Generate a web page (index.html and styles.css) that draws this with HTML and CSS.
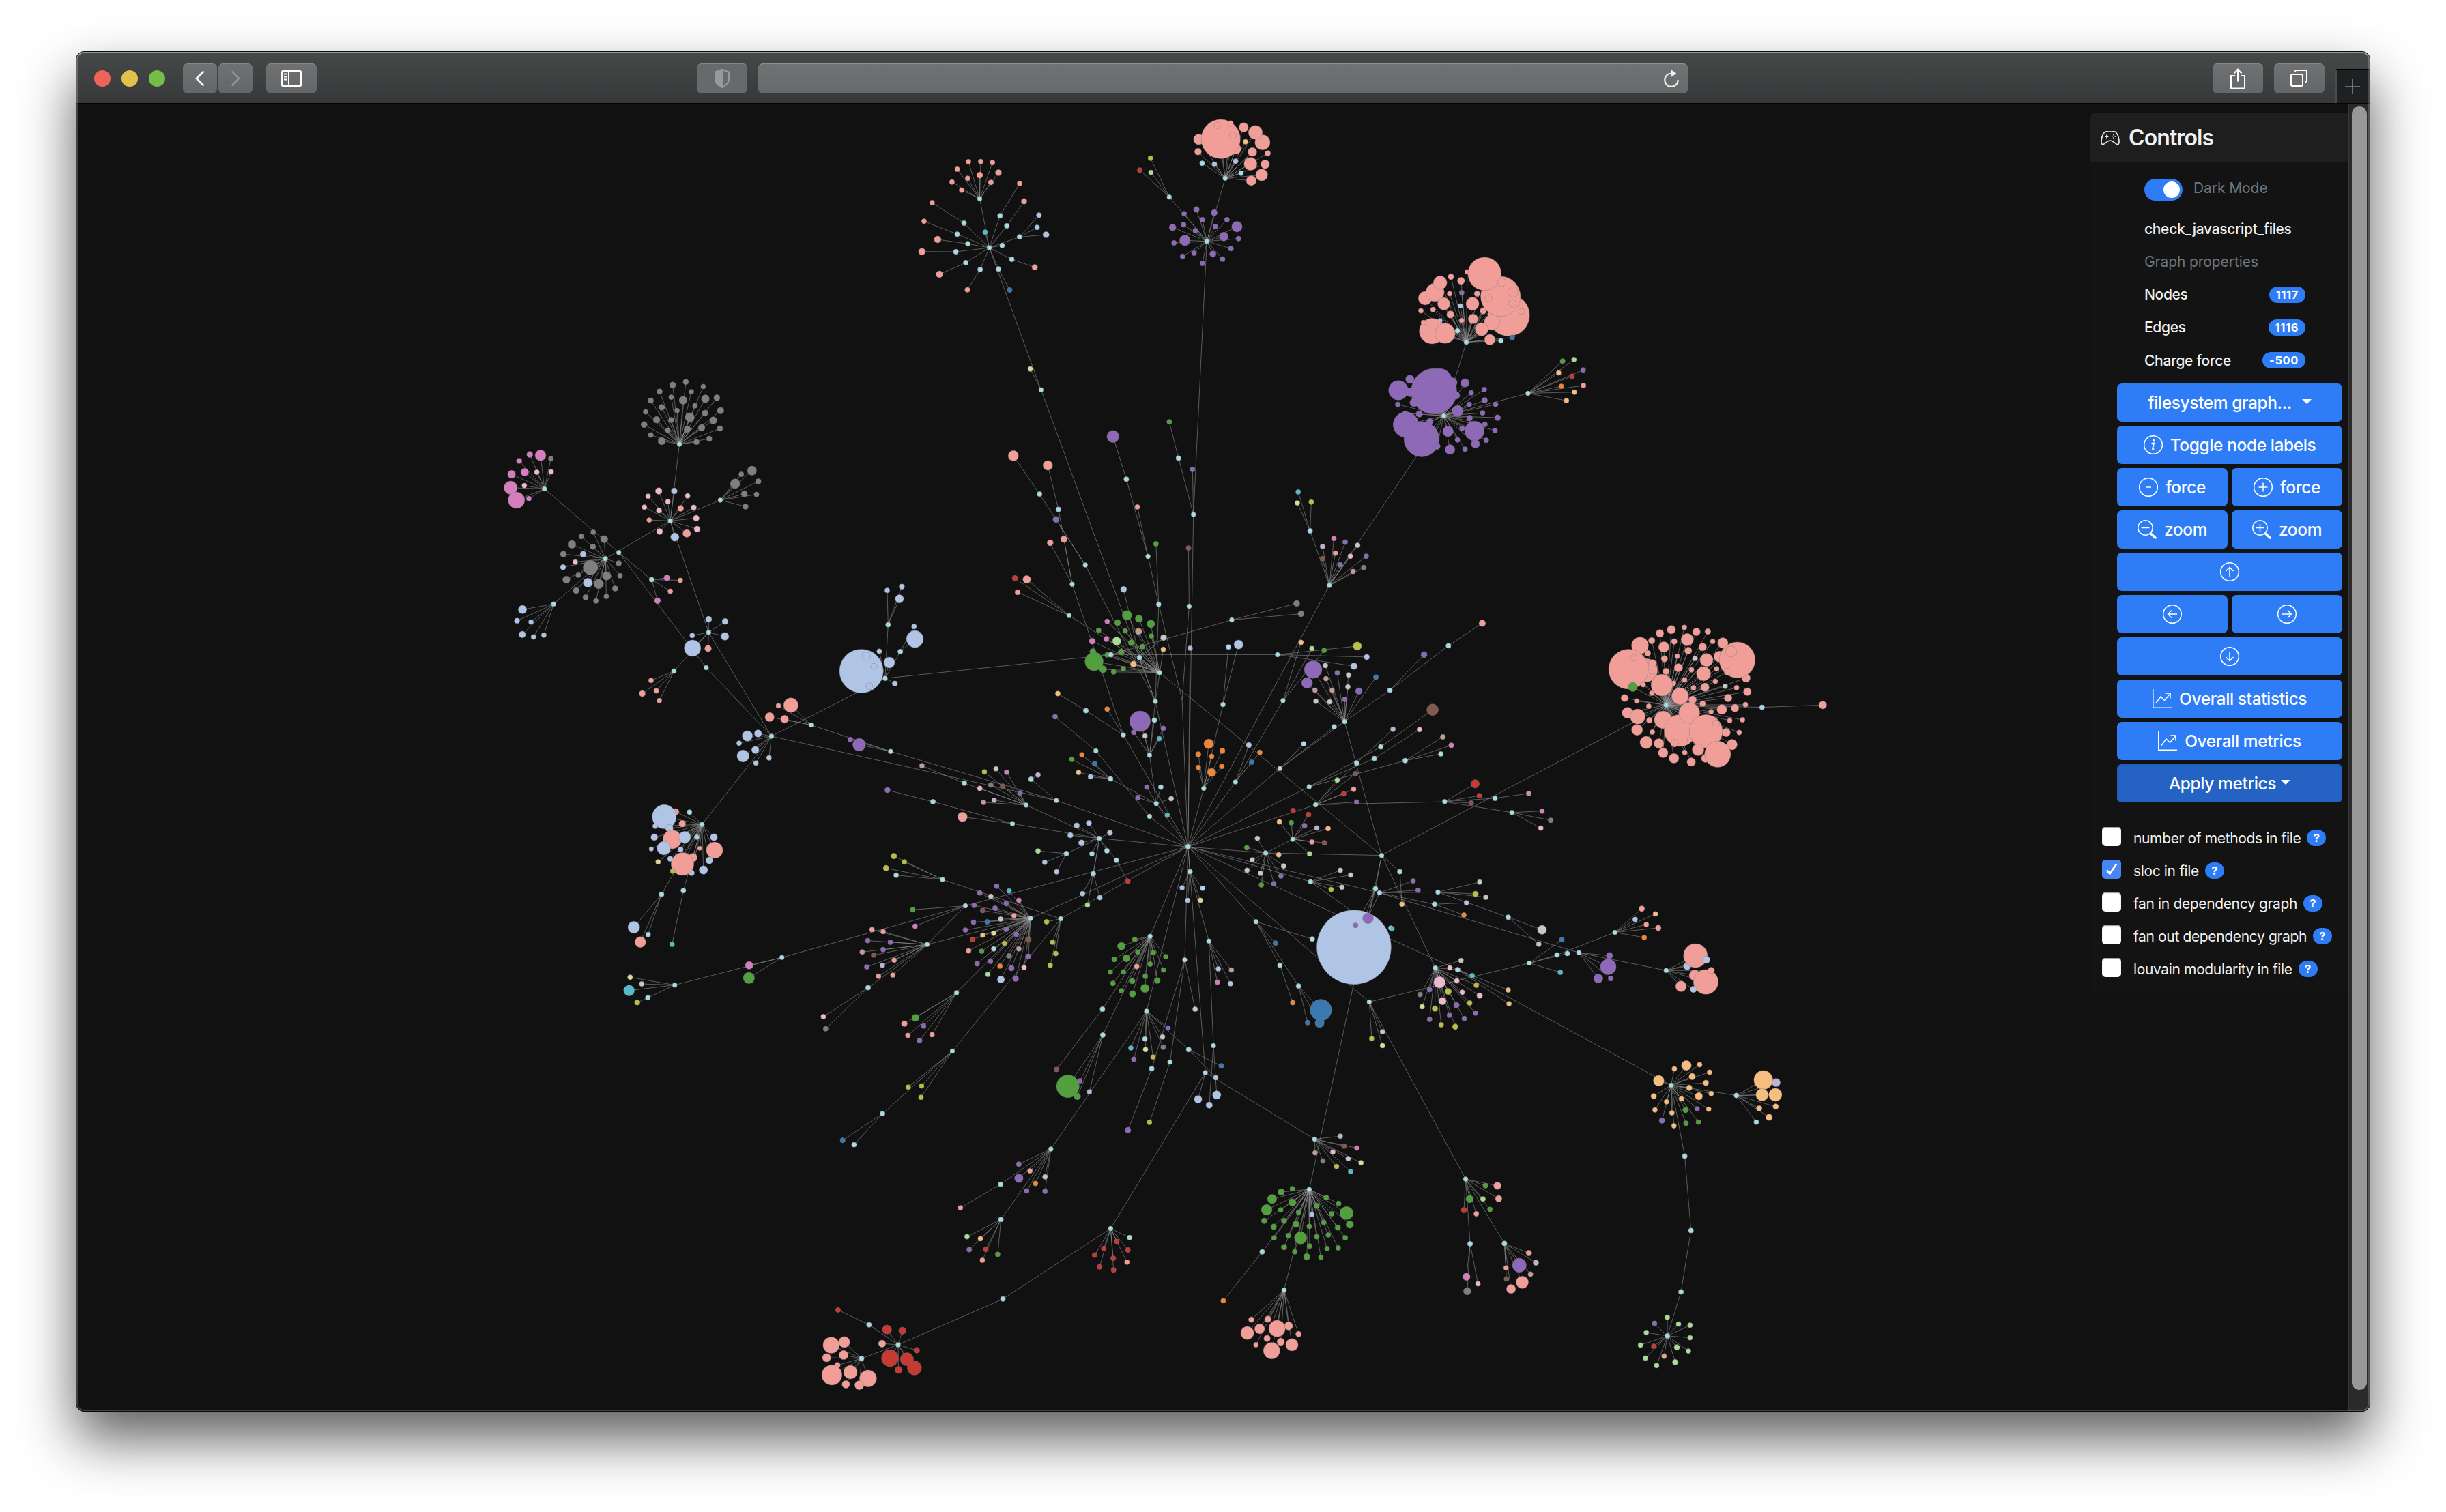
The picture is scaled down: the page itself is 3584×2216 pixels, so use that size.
FILE: index.html
```html
<!DOCTYPE html>
<html lang="en">
<head>
<meta charset="utf-8">
<title>Graph</title>
<link rel="stylesheet" href="styles.css">
</head>
<body>
<svg class="sprite" aria-hidden="true">
  <symbol id="minus" viewBox="0 0 28 28"><circle cx="14" cy="14" r="13.3"/><path d="M10 14h8"/></symbol>
  <symbol id="plus" viewBox="0 0 28 28"><circle cx="14" cy="14" r="13.3"/><path d="M7.5 14h13M14 7.500v13"/></symbol>
  <symbol id="up" viewBox="0 0 28 28"><circle cx="14" cy="14" r="13.300"/><path d="M14 21V8M8.500 13 14 7.500l5.500 5.500"/></symbol>
  <symbol id="down" viewBox="0 0 28 28"><circle cx="14" cy="14" r="13.300"/><path d="M14 7v13M8.500 15l5.500 5.500 5.500-5.500"/></symbol>
  <symbol id="left" viewBox="0 0 28 28"><circle cx="14" cy="14" r="13.300"/><path d="M21 14H8M13 8.500 7.500 14l5.500 5.500"/></symbol>
  <symbol id="right" viewBox="0 0 28 28"><circle cx="14" cy="14" r="13.300"/><path d="M7 14h13M15 8.500l5.500 5.500-5.500 5.500"/></symbol>
  <symbol id="info" viewBox="0 0 28 28"><circle cx="14" cy="14" r="13.300"/><path d="M11.500 11.800l3.600-.5-2 8.200c-.2 1.200.9 1.200 2 0" stroke-width="1.800"/><circle cx="14.800" cy="7.800" r="1" fill="#fff"/></symbol>
  <symbol id="zoomout" viewBox="0 0 28 28"><circle cx="11.500" cy="11.500" r="10.700"/><path d="M5.500 11.500h12"/><path d="M19.500 20l6.500 6" stroke-width="3.600" stroke-linecap="round"/></symbol>
  <symbol id="zoomin" viewBox="0 0 28 28"><circle cx="11.500" cy="11.500" r="10.700"/><path d="M5.500 11.500h12M11.500 6v11"/><path d="M19.500 20l6.500 6" stroke-width="3.600" stroke-linecap="round"/></symbol>
  <symbol id="chart" viewBox="0 0 28 28"><path d="M.8 0v27.200H28M5 20.500l7-9.500 5.500 5.500L26 6.500M18.500 6H26v7.500"/></symbol>
</svg>
<div class="window">
  <header class="toolbar">
    <span class="dot red"></span><span class="dot yellow"></span><span class="dot green"></span>
    <span class="tool back"><svg width="14" height="24" viewBox="0 0 14 24"><path d="M12.500 1.500 2 12l10.500 10.500" stroke-width="2.800"/></svg></span>
    <span class="tool forward"><svg width="14" height="24" viewBox="0 0 14 24"><path d="M1.500 1.500 12 12 1.500 22.500" stroke-width="2.400"/></svg></span>
    <span class="tool wide sidebar"><svg width="30" height="24" viewBox="0 0 30 24"><rect x="1" y="1" width="28" height="22" rx="1.500"/><path d="M11 1v22M4 5.500h4M4 9.500h4M4 13.500h4"/></svg></span>
    <span class="tool wide shield"><svg width="26" height="28" viewBox="0 0 26 28"><path d="M13 1 23 4.500V15c0 5-4 9-10 12C7 24 3 20 3 15V4.500z"/><path d="M13 1v26C7 24 3 20 3 15V4.500z" fill="#98999b"/></svg></span>
    <div class="address"><svg width="26" height="28" viewBox="0 0 26 28"><path d="M13.500 6.500A9.700 9.700 0 1 0 22.700 16" stroke-width="2.200"/><path d="M12.500 1l8 5.700-8 5.300z" fill="#eee" stroke="none"/></svg></div>
    <span class="tool wide share"><svg width="24" height="32" viewBox="0 0 24 32"><path d="M8 12H2v18.500h20V12h-6M12 20.500V3M6.500 8.500 12 2.500l5.500 6"/></svg></span>
    <span class="tool wide tabs"><svg width="26" height="26" viewBox="0 0 26 26"><rect x="1" y="7" width="17" height="17" rx="2"/><path d="M7 4V3q0-2 2-2h13q2 0 2 2v13q0 2-2 2h-1"/></svg></span>
    <span class="newtab"><svg width="22" height="22" viewBox="0 0 22 22"><path d="M11 0v22M0 11h22" stroke-width="1.600"/></svg></span>
  </header>
  <main class="page">
    <svg class="graph" id="graph" viewBox="112 152 2950 1916"></svg>
    <aside class="panel">
      <h1 class="title"><svg width="28" height="22" viewBox="0 0 28 22"><path d="M5.500 3C7 1.500 9.500 2 11 2h6c1.500 0 4-.5 5.500 1 3 3.500 4.500 10 4.500 14 0 3-1.500 4-3 3.500-3-1-5.500-5.500-10-5.500s-7 4.500-10 5.500C2.500 21 1 20 1 17 1 13 2.500 6.500 5.500 3z"/><path d="M9 6.500v5M6.500 9h5" stroke-width="1.800"/><path d="M19 6v1.500M19 10.500V12M16 9h1.500M20.500 9H22" stroke-width="1.700"/></svg>Controls</h1>
      <div class="props">
        <div class="row mode"><span class="switch"></span><span class="label muted">Dark Mode</span></div>
        <div class="row"><span class="file">check_javascript_files</span></div>
        <div class="row"><span class="muted">Graph properties</span></div>
        <div class="row"><span>Nodes</span><b class="badge">1117</b></div>
        <div class="row"><span>Edges</span><b class="badge">1116</b></div>
        <div class="row"><span>Charge force</span><b class="badge">-500</b></div>
      </div>
      <div class="buttons">
        <button class="btn full">filesystem graph...<i class="caret"></i></button>
        <button class="btn full"><svg class="icon"><use href="#info"/></svg>Toggle node labels</button>
        <button class="btn"><svg class="icon"><use href="#minus"/></svg>force</button>
        <button class="btn"><svg class="icon"><use href="#plus"/></svg>force</button>
        <button class="btn"><svg class="icon"><use href="#zoomout"/></svg>zoom</button>
        <button class="btn"><svg class="icon"><use href="#zoomin"/></svg>zoom</button>
        <button class="btn full"><svg class="icon"><use href="#up"/></svg></button>
        <button class="btn"><svg class="icon"><use href="#left"/></svg></button>
        <button class="btn"><svg class="icon"><use href="#right"/></svg></button>
        <button class="btn full"><svg class="icon"><use href="#down"/></svg></button>
        <button class="btn full"><svg class="icon"><use href="#chart"/></svg>Overall statistics</button>
        <button class="btn full"><svg class="icon"><use href="#chart"/></svg>Overall metrics</button>
        <button class="btn full active">Apply metrics<i class="caret near"></i></button>
      </div>
      <div class="metrics">
        <label class="metric"><span class="box"></span>number of methods in file<b class="badge q">?</b></label>
        <label class="metric"><span class="box checked"><svg width="18" height="18" viewBox="0 0 18 18"><path d="M2 10.500 6.500 15.500 16 1.500"/></svg></span>sloc in file<b class="badge q">?</b></label>
        <label class="metric"><span class="box"></span>fan in dependency graph<b class="badge q">?</b></label>
        <label class="metric"><span class="box"></span>fan out dependency graph<b class="badge q">?</b></label>
        <label class="metric"><span class="box"></span>louvain modularity in file<b class="badge q">?</b></label>
      </div>
    </aside>
    <div class="scroll"><div class="thumb"></div></div>
  </main>
</div>
<script src="graph.js"></script>
</body>
</html>
```
FILE: styles.css
```css
* { box-sizing: border-box; }
body { margin: 0; width: 3584px; height: 2216px; padding: 75px 111px; background: #fff; overflow: hidden; font-family: Inter, "Liberation Sans", sans-serif; }
.sprite { position: absolute; width: 0; height: 0; }
svg { fill: none; stroke: #fff; stroke-width: 2; display: block; flex: none; }
.window { position: relative; width: 3362px; height: 1994px; border: 1px solid #0a0a0a; border-radius: 12px; overflow: hidden; background: #111; box-shadow: 0 40px 80px rgba(0,0,0,.63); display: flex; flex-direction: column; }
.window::after { content: ""; position: absolute; inset: 0; border-radius: 11px; box-shadow: inset 0 2px 0 rgba(255,255,255,.3), inset 0 0 0 2px rgba(255,255,255,.2); pointer-events: none; }
.toolbar { height: 76px; flex: none; display: flex; align-items: center; padding: 2px 0 0 26px; border-bottom: 1px solid #050505; background: linear-gradient(#464949, #373839); }
.dot { width: 24px; height: 24px; border-radius: 50%; margin-right: 16px; }
.red { background: #ed655a; }
.yellow { background: #e1c04c; }
.green { background: #72be47; }
.tool { width: 50px; height: 44px; display: flex; align-items: center; justify-content: center; border-radius: 7px; background: linear-gradient(#6f7173, #656667); box-shadow: inset 0 1px 0 #858789; }
.back { margin-left: 10px; }
.forward { margin: 0 20px 0 2px; }
.forward svg { stroke: #98999b; }
.wide { width: 74px; }
.shield { margin-left: 557px; margin-right: 16px; background: #67696b; }
.shield svg { stroke: #98999b; }
.address { width: 1362px; height: 44px; border-radius: 7px; background: linear-gradient(#717274, #68696b); box-shadow: inset 0 1px 0 #8d8f91; display: flex; align-items: center; justify-content: flex-end; padding-right: 11px; }
.address svg { stroke: #eee; }
.share { margin-left: 769px; margin-right: 16px; }
.newtab { margin-left: 16px; align-self: flex-end; flex: 1; height: 50px; background: #1e2021; border-top: 1px solid #000; border-left: 2px solid #4a4c4d; display: flex; align-items: center; justify-content: center; padding-right: 3px; }
.newtab svg { stroke: #858585; }
.page { flex: 1; display: flex; align-items: flex-start; }
.graph { width: 2950px; height: 1916px; }
.graph line { stroke: #999; stroke-opacity: .55; stroke-width: 1; }
.graph circle { stroke: #777; stroke-opacity: .5; stroke-width: .8; }
.panel { width: 378px; margin-top: 14px; background: #131313; border-radius: 6px 0 0 6px; color: #f0f0f0; }
.title { margin: 0; height: 72px; padding: 0 0 2px 16px; display: flex; align-items: center; gap: 13px; background: #1e1e1e; border-radius: 6px 0 0 0; font-size: 32px; font-weight: 600; letter-spacing: -.9px; }
.title svg { stroke: #e8e8e8; stroke-width: 1.700; margin-top: 2px; }
.props { margin: 0 22px 0 40px; font-size: 21px; font-weight: 500; letter-spacing: -.32px; }
.row { height: 48px; padding: 0 40px; display: flex; align-items: center; justify-content: space-between; border-bottom: 1px solid #101010; }
.row:last-child { border: 0; }
.mode { height: 74px; justify-content: flex-start; gap: 16px; padding-top: 6px; }
.mode .label { margin-top: -5px; }
.muted { color: #6c757d; font-weight: 400; letter-spacing: -.08px; }
.switch { width: 56px; height: 32px; border-radius: 16px; background: #2f7df6; display: flex; justify-content: flex-end; padding: 4px; }
.switch::after { content: ""; width: 24px; height: 24px; border-radius: 50%; background: #fff; }
.badge { height: 24px; padding: 0 10px; border-radius: 12px; background: #2f7df6; color: #fff; font-size: 16.500px; font-weight: 700; line-height: 24px; letter-spacing: .6px; }
.buttons { margin: 10px 8px 0 40px; display: grid; grid-template-columns: 162px 162px; grid-auto-rows: 56px; gap: 6px; }
.btn { border: 0; border-radius: 7px; padding: 0; background: #2f7df6; color: #fff; font: 500 24.500px Inter, sans-serif; letter-spacing: -.4px; display: flex; align-items: center; justify-content: center; gap: 11px; }
.full { grid-column: span 2; }
.active { background: #2463c4; box-shadow: inset 0 0 0 2px #225ebc; }
.icon { width: 28px; height: 28px; stroke-width: 1.500; }
.caret { border: 7px solid transparent; border-top-color: #fff; border-bottom: 0; margin: -3px 0 0 4px; }
.near { margin-left: -4px; }
.metrics { margin: 5px 0 0 2px; height: 273px; padding: 22px 0 0 16px; border-top: 1px solid #101010; border-radius: 6px 0 0 6px; }
.metric { height: 48px; display: flex; align-items: center; font-size: 21px; font-weight: 400; letter-spacing: -.36px; white-space: nowrap; }
.box { width: 28px; height: 28px; margin: -5px 18px 0 0; border-radius: 5px; background: #fff; display: flex; align-items: center; justify-content: center; flex: none; box-shadow: inset 0 1px 1px #999; }
.checked { background: #4785f4; box-shadow: none; }
.checked svg { stroke-width: 2.800; }
.q { width: 28px; padding: 0; text-align: center; margin-left: 9px; letter-spacing: 0; }
.scroll { width: 32px; height: 1916px; background: #2a2a2a; border-left: 2px solid #353535; padding: 4px 0 0 4px; }
.thumb { width: 22px; height: 1881px; border-radius: 11px; background: #989898; }
```
FILE: graph.js
```js
// Node colours by group letter; "t" is a directory, "z" is a link without a node.
const COLORS = {
  t: '#aadbe5', P: '#f19e99', u: '#8d69b8', b: '#b0c5e6', g: '#529f3f', G: '#a8dd93',
  o: '#ef8636', O: '#f6bd80', r: '#c53a32', k: '#d57ebe', K: '#eeb8d1', n: '#84584e',
  N: '#be9e96', y: '#7f7f7f', Y: '#c7c7c7', l: '#bcbd45', L: '#dbdb92', c: '#58bbcc',
  B: '#3b78b0', U: '#c2b1d4'
};

// Each sheet has an origin, a scale and lines "hub: children"; a child is letter x,y[,radius].
const SHEETS = [
{ x: 700, y: 500, kx: 2.24, ky: 2.24, data: `
662,338: y683,134,9 y640,144,10 y740,149,8 y597,165,9 y701,166 y785,186,10 y635,184 y674,194,13 y747,189,13 y568,195,9 y604,217,10 y713,212 y654,228 y551,232 y797,228,11 y746,236,10 y587,258,11 y635,259,9 y696,250,15 y773,260,12 y546,274,10 y624,293 y688,289,11 y735,284,11 y795,287,9 y568,308 y604,328,12 y718,331,9 y760,320,9 z632,590
219,485: k171,372,10 k206,375,18 k136,393,9 y240,386 k111,437,13 k154,430,13 K194,430 K241,429 k108,481,22 K153,474 k127,522,27 k168,517 z463,694
632,590: K594,492,11 b645,492,10 K559,509 K689,508 K624,527 K547,545 K595,556,9 P666,549,10 K709,546,9 P563,587 K717,581,10 K597,625,10 K720,617,10 P686,631,13 z796,522 z419,714 b647,643,14 z758,956
796,522: y865,437 y900,425,15 y845,468,16 y921,460,9 y875,501,10 y915,503 y879,543,9
419,714: y379,627 y340,641 y415,650,12 y309,667,13 y378,675,9 b346,699,10 y281,699,10 K320,725 b280,742,9 y370,743,24 y463,729,9 y291,783,12 y330,768 y423,771,14 y467,770 b361,793,15 y397,797,16 y323,819,10 y451,812,9 y354,841,9 y388,853 y422,838 z249,863
249,863: b147,881,14 b129,918,9 b175,922 b146,963,11 b183,971 b217,965
463,694: t571,783 z750,1072
571,783: k621,777,10 P665,785 P632,821 k590,852,10
750,1072: z964,1297
758,956: b758,913,10 b812,920,10 b704,966 b811,969,13 P756,1009,11 b705,1008,27 t644,1083 z964,1297
644,1083: P569,1114 P540,1157,10 P586,1148 P596,1180
964,1297: b885,1296,17 b920,1288,12 b858,1320 b871,1362,20 b911,1342,12 b913,1385 b956,1368 z1337,1107
1337,1107: b1318,1018 b1259,1083,72 b1275,1034,14 b1300,1068,10 b1286,1133,11 b1351,1055,18 b1369,1124,9 t1347,931 t1387,1019
1347,931: b1344,818 b1392,806,9 b1384,846,14
1387,1019: b1432,937 b1435,978,28
1094,1260: P987,1197 P1028,1195,24 P958,1234,15 P1007,1241,13 z1355,1347
1355,1347: u1223,1308 u1252,1325,21` },
{ x: 1300, y: 160, kx: 2.6133, ky: 3, data: `
354,394: P311,231 P358,230 P403,235 P268,264 P308,304 P354,290,12 P426,279,12 P248,320 P397,322,10 P285,356 z391,609
391,609: t294,501 t432,469 t458,513 t268,550 c375,541 t309,592 t263,627 t301,675 t356,705 t426,703 t477,660 t440,599 t507,562 z589,1234
294,501: P172,411
432,469: P507,327
458,513: P524,405,11
268,550: P141,493
309,592: P193,573,13
263,627: P133,626,13
301,675: P200,726,13
356,705: P307,794,10
426,703: B469,795
477,660: P565,695,11
507,562: b581,466,10 b574,520 b608,552,12
589,1234: L548,1142
1080,386: l1008,215 r967,268 G1010,278 z1224,581
1224,581: u1137,460 u1184,441,11 u1252,455,12 u1207,486 u1301,486 u1135,508 u1093,520,13 u1180,534 u1256,516 u1339,517,20 u1289,560,17 u1140,577,20 u1098,588 u1345,569 u1316,613,10 u1247,637,12 u1175,633 u1131,647 u1284,659,10 u1207,678 z1294,304
1294,304: P1193,133,20 P1335,175,20 P1277,131,75 P1264,71,12 P1315,63,11 P1323,116,13 P1365,80,18 P1437,146,29 P1410,102,27 O1372,143 P1190,187,13 P1398,188,17 P1457,194,11 t1206,238 b1253,242,10 b1334,229,10 P1391,240,25 P1447,242,17 t1355,281 P1434,289,23 P1394,314,19` },
{ x: 1400, y: 600, kx: 2.24, ky: 2.24, data: `
763,1436: z781,345 z656,959 z551,1069 z744,954 z815,1244 z919,1223 z1227,578 z1065,1179 z1161,1239 z1182,1298 z1018,1456 z472,1408 z331,1284 z637,1336 z659,1294 U770,784
781,345: z825,-552 t732,160 u778,197
732,160: g702,41
656,959: z281,-64 O682,788 z604,815 z637,1135 z667,640 z426,511
632,483: P597,320 t561,229
667,640: z632,483 g658,441 z744,954
561,229: u517,89,20
426,511: u330,361,10 t276,278
276,278: P190,152,17
383,574: P311,438,10 P356,426,11 t338,328 z551,1069
338,328: P303,184,16
551,1069: t428,989 o498,984
428,989: O336,933
373,677: r195,554,9 P234,558,13 P204,600,9 z670,864
670,864: g563,676,16 g602,687,12 g641,704,13 g532,700,10 k498,696 g470,725 g557,727 N601,729,11 g643,744 k495,754,9 k449,761,10 g577,766,10 G529,761,14 g613,779 g451,795,10 g544,796,10 g498,806 t510,805 t604,815 O584,836,10 g484,853,12 g455,828,30 g519,862 g551,851 z1398,1464
510,805: z-231,883 z1057,805 z907,691
604,815: Y683,749,10 b552,591,10
907,691: y1120,637,10 y1134,671,10
1057,805: l1319,777,14 b1350,813,9 b1308,843,11
767,646: n765,455 z744,954
637,1135: u585,1060 Y622,1072 t653,1020 u682,1047 c669,1081 u606,1024,34
659,1294: u628,1240 t674,1240 u599,1274 Y708,1278 c695,1332 t509,1213 z637,1135
509,1213: g382,1149 o415,1134 B457,1163 O404,1192 b443,1206
461,1121: u327,1009 z637,1336
637,1336:
878,969: t896,780 b929,772,15 z815,1244
815,1244: o831,1098,16 o797,1132,9 o876,1121,9 o841,1139 o797,1175 o874,1172 o841,1192,14
919,1223: b963,1102,9 o999,1126 B972,1158 z1075,956
1075,956: O1134,765 G1170,785 g1210,791
1227,578: N1305,532 y1340,519 u1348,482 K1296,482 Y1320,446 u1279,436 k1242,424 P1247,472 u1263,510 U1205,450 n1205,490 t1164,399 z1603,21
1164,399: c1125,271 L1122,307 l1168,304
1277,1025: u1174,854,29 u1154,898,18 Y1214,841 u1253,865 N1216,884 N1180,922 N1236,922 Y1290,872 Y1288,911 Y1183,958 Y1228,960 u1278,952 u1324,925,11 B1380,879 z1065,1179 z1398,1464 t1426,922
1426,922: u1538,805,10 t1618,776
1618,776: P1729,702,11
1065,1179: t1243,1042 t1143,1098
1161,1239: t1396,1108 t1375,1146 t1476,1153
1182,1298: G1253,1217 t1317,1161 r1274,1262 P1307,1247 u1317,1289 n1313,1196 z1606,1288
1317,1161: U1436,1050
1396,1108: n1566,986,19
1375,1146: K1523,1051
1107,1411: r1108,1317 r1159,1330 O1063,1354 g1102,1357 u1146,1367 U1186,1374 O1223,1376 P1170,1420 n1211,1423 G1162,1459 z1018,1456
1018,1456: Y991,1408 g956,1439 Y974,1479 Y957,1513 Y1001,1523 O1061,1462 Y1077,1499 g1004,1561 u1045,1557 u1068,1532 z1398,1464
232,1299: l95,1190 Y133,1180 k168,1191 K80,1244 y116,1233 n155,1237 N92,1290 U127,1283 u212,1259 t29,1227 z472,1408
29,1227: N-110,1170
331,1284: t248,1214 z-213,1123 z-604,1073
248,1214: U271,1200
187,1360: P23,1338,16 t-74,1288 z472,1408
-74,1288: u-223,1250,9
472,1408: b438,1358,9 b398,1366,9 b377,1398,9 b414,1423,10 b507,1390,9 t497,1449 t448,1459 t528,1480 t364,1458 t452,1525
364,1458: G271,1450 b293,1487 b332,1518
528,1480: r566,1549` },
{ x: 1950, y: 340, kx: 2.0907, ky: 1.8447, data: `
415,298: P368,121,9 P418,108 P399,132,11 P289,179,21 P319,163,28 P335,137,21 u401,164 P364,167 P448,167,9 P346,194,19 b397,200 P434,194,20 P276,213 P313,210 P366,223,11 P467,213,10 P401,239 P436,235,15 b334,240 P310,268,39 P284,245 P350,274,31 t388,267 P545,225,64 P520,174,61 P471,113,51 P524,136,13 P558,162,16 P556,193,12 P483,179,11 P585,215,9 P494,244,24 P462,263,20 P487,291,16 t521,294 B556,285 z346,497
346,497: u207,428,30 u242,398,13 u241,433,13 u372,407,15 u316,431,70 u290,392,11 u334,401,36 u347,448,18 u411,408,13 u384,442,11 u205,466 u255,461,13 u470,426 u430,435 u471,455,9 u424,466 u505,466 u388,484,17 u271,492,10 u465,489 u425,503,9 u511,502,9 u303,513,10 u230,521,39 u228,490 u278,560,54 u265,529,11 u318,548 u325,579,10 u359,539,16 u472,520 u402,531 u440,538,30 u503,537 u388,562 u443,573,13 u476,563 u365,588,15 u411,587 z604,436
604,436: g710,349 G745,345 u773,373 O698,381 r739,390 P774,415 o706,417 O746,433 O722,456
228,1429: N343,1365,8 k369,1388,8 t337,1411
349,1540: r442,1492,13 r455,1524 n430,1544 t503,1531
503,1531: N606,1518
1027,1279: P1043,1075,13 P1083,1069 P1008,1085,12 P1120,1081,12 P1155,1080,9 P983,1105,10 P1052,1107,9 P1092,1102,19 P1170,1107 P1201,1111,16 P947,1118,26 P1020,1122,16 P1139,1122,12 P1095,1132,11 P971,1139,9 P1061,1147 P1022,1154,10 Y1116,1153 P1151,1157,20 P1190,1148,17 P965,1185,36 P985,1166,12 P985,1200 P912,1182,61 P928,1151,10 P1065,1178,13 P1027,1188,10 P1105,1184 P1182,1181 P1142,1194,22 P1272,1206,13 P1245,1157,55 P1226,1134,17 P1216,1189,11 P1084,1211 P1178,1215 P957,1224 P1050,1220 g925,1230,14 P1014,1225,33 P1111,1232 P1146,1231,13 Y1208,1228 P1243,1232 P1276,1243,12 P983,1247 P1070,1255,26 P900,1260,11 P1217,1260,12 P937,1268 P1108,1265,12 P1139,1275,9 P974,1282 P1198,1291,15 P1238,1287,12 P1270,1278 P1165,1297 P909,1300,17 P940,1310,23 P1018,1319,27 P1070,1348,49 P1098,1300,32 P976,1320,9 P1222,1321 P1261,1319 P938,1346,17 P985,1352 P1211,1353,13 P1251,1353 P1149,1350,51 P1180,1329,11 P966,1380,19 P1005,1383,15 P1053,1382,12 P1099,1373 P1125,1400,18 P1084,1407 P1229,1386,16 P1018,1408,15 P1051,1423,15 P1104,1433,13 P1148,1423,13 P1185,1412,40 t1321,1285 z155,1685
1321,1285: P1507,1279,12` },
{ x: 1150, y: 1180, kx: 2.0907, ky: 1.7422, data: `
1235,106: z753,289 z845,290 z553,257 t1241,170 z1119,335 z1225,395 z1288,683 z1108,526
553,257: g392,267 k399,309 z436,356 z-9,389
483,190: l334,130,9 l366,145 l310,161,9 t341,179 z845,290
845,290: l802,298 l820,350 l830,379 l813,409 z513,628
513,628: l378,720 l419,717 l417,746 t299,788
299,788: B177,856 t212,867
753,289: u649,207 c687,219 u597,224 Y631,233 k717,243 u678,251 u580,256 n606,269 u644,263 P702,282 Y661,291 u578,299 B620,298 u553,319 u678,317 n746,343,9 u709,330 L640,327 O606,332 r575,343 l673,353 t640,367 P563,372 g603,373 y687,385 N717,367 u746,386,8 u589,405 u630,399 o659,411 u694,416,9 K733,415 G622,432 u707,443,9 b662,445,11 z436,356 z526,479
436,356: P267,318 P301,323 u254,346 u323,350 N237,375 n272,383 u301,369 P335,396 u251,413 U299,409 P287,437 P331,434 t255,466
255,466: K118,540 y125,571
526,479: P366,558,9 g400,543,11 u425,564 P377,588 u413,601 P451,586
945,175: b912,226 b965,236 G927,255 z964,85
1241,170: b1217,211 t1280,212 b1234,243 L1273,243 z1299,347
1119,335: g1072,343 g1031,360,12 g1081,375 g1009,394 g1046,391,11 g1129,377 g1167,387 P1078,412 g1119,406 g997,426 g1037,426 g1160,421 g1104,437 g1064,449,9 g1005,455 g1141,448,9 g1031,474 g1103,468,13 g1065,482,10 t973,521 t974,587
973,521: n832,675
974,587: g867,718,35 u904,704 g896,744,10 U933,732
1108,526: t1103,597 c1060,620 L1105,624 u1069,649 l1128,643 Y1157,592 u1174,569 y1159,618 z815,878 t1237,624
1225,395: Y1257,521 t1124,673 t1180,656
1124,673: u1051,830,9
1180,656: l1117,810
1237,624: B1337,666 b1320,696
1288,683: z998,1081 z1623,853 b1266,751,12
1299,347: b1328,418 N1368,421 k1325,452 b1365,456,8 z1313,614
1313,614: b1323,740,13 b1300,766,10
815,878: u717,917,8 u717,953,13 P751,934 Y797,949,8 o768,966 u741,985 u797,986 t661,968 t662,1058
661,968: P538,1028
662,1058: G558,1102 O599,1107 u565,1135 r616,1134 P605,1162 g652,1147
998,1081: t1056,1104 r1017,1114 r977,1132 r1051,1136 r949,1149 r1006,1157 P1048,1167 r964,1179 r1007,1187 t668,1261
668,1261: z347,1378
347,1378: r313,1339,14 r360,1342,11 P298,1375,11 r404,1392,9 r322,1412,26 r374,1415,20 r397,1437,22 r348,1442,11 t258,1327 t235,1413
258,1327: r163,1289
235,1413: P142,1379,25 P182,1371,17 P128,1411,13 P180,1404,14 P161,1430,9 P144,1455,31 P201,1448,21 P255,1464,26 P187,1479,12 P228,1481,14` },
{ x: 900, y: 1160, kx: 3, ky: 3, data: `
386,145: P271,89,14 b220,111,53 t331,91 P299,142,15 b180,152,11 b242,162,17 b176,201,15 P255,211,41 b310,201,26 b363,200 b438,201,16 b218,249,30 b163,253,10 b292,255,12 P376,250,10 L193,310 b246,296,12 P346,290,19 b340,358,13 P300,319,50 l257,350 b392,345,19 b418,303,16 P441,258,36 t208,452 t304,436 z691,-243
208,452: b86,597,26 t149,629 P115,662,24
304,436: c254,672
737,730: k593,764,17 g592,820,25 z266,851
266,851: L70,817 Y121,846 c65,875,24 t148,907
148,907: l101,928,12` },
{ x: 1750, y: 1180, kx: 1.6505, ky: 1.8447, data: `
-15,112: z281,207 z448,237 z637,445 z149,315 z423,532
768,20: k841,16 y862,41 K838,62 z606,-9
453,136: t497,180 t438,226 z583,440 z278,1039
497,180: O502,268
281,207: Y353,176 Y378,189 Y357,222 l331,228 z385,290
448,237: u529,205 u541,230 z589,235 t581,268 z930,399 z386,384
589,235: Y690,208 l680,240,7 Y705,249 t759,303
581,268: b658,264 o652,297
759,303: Y841,337,11 Y833,376
438,226: b386,384,90 u420,306,13 u390,325
930,399: u1004,407,8 u1001,437,19 u977,469,11 u1007,469 z1141,447
1141,447: b1192,435,9 P1212,407,29 b1238,418,9 P1210,460,13 P1237,478,30 P1250,447,8 P1177,490,13 b1207,498,8
149,315: t285,362 B196,373 t207,433 t252,489
207,433: o238,534
252,489: B306,554,26 B303,589,11 B274,588
423,532: l429,631 Y455,613 L455,650 z810,427 z656,1011
475,332: c478,334
810,427: B889,364 t877,405 t902,401 c885,452
877,405: z1017,344
1017,344: P1082,280,7 b1066,309 O1115,294 P1093,323 P1122,332,7 o1088,358
583,440: Y645,420 K618,440 t637,445 K635,475 K593,479,14 l682,487 K648,506 l614,504,8 u569,499 y546,512 K690,515,7 K600,530,9 l666,535 L551,545 l582,550,7 u634,541,7 u680,562 u617,568 u569,579 u653,577 l597,594 l631,599,7
637,445: c672,461 O759,500 O761,537 z1153,757
1153,757: O1190,704,12 O1222,702 O1161,713 O1246,722 O1123,745,13 O1204,734,8 O1237,751,7 O1197,764,7 O1111,787,7 O1178,794 O1220,787,9 O1250,780 O1142,802 O1114,824 O1155,832 g1188,824,7 u1216,821 O1244,822 u1131,853,7 g1189,860 g1219,857 O1160,867 t1311,785 t1186,949
1311,785: O1376,743,23 U1407,750,10 O1373,783,15 O1405,783,16 O1366,820,7 O1406,815,7 O1390,844,8 t1359,857
1186,949: t1201,1150
1201,1150: t1177,1316
1177,1316: t1144,1435
1144,1435: G1144,1385 u1113,1401 G1171,1403 G1199,1406 G1093,1426 G1199,1440 G1079,1460 r1111,1463 G1167,1466,7 G1195,1476 P1136,1490 G1091,1495 G1163,1506,7 G1118,1515
291,903: U353,895 n362,922 k393,927 N292,940 K335,938 Y372,956 L403,967 y311,962 l344,977 c378,991
278,1039: g237,1037 g210,1046,8 g188,1065,11 g319,1061 g237,1074,9 g349,1077 g175,1094,13 g209,1094 g296,1083,7 g252,1101 b284,1107 g332,1105 g368,1103,16 g169,1124,7 g217,1124,7 g246,1133,8 g313,1128 g376,1134,9 g192,1140,7 g278,1139 g347,1142,7 g193,1170 g227,1164 g257,1170,15 g296,1167 g324,1162 g365,1170 g217,1195,7 g279,1192 g321,1199 g348,1197 g243,1208 g272,1221,8 g306,1222 t164,1208 t217,1311
164,1208: o70,1340
217,1311: P138,1391,7 P178,1390,8 P128,1427,16 P158,1416,12 P200,1415,20 P228,1408,10 P252,1430,7 P176,1442,8 P149,1459,6 P209,1451,9 P236,1459,15 P187,1475,20
656,1011: g704,1029 P733,1029,9 g666,1065,9 G698,1065 P736,1064,8 r652,1095,7 P682,1105 g715,1093 t667,1186 t750,1185
667,1186: k658,1275,9 K686,1294 y660,1314,9
750,1185: P809,1211,7 u786,1244,17 U826,1237,7 P754,1251 N813,1268 n755,1281 P793,1290,15 P766,1308,11` }
];

const links = [];
const nodes = [];
for (const s of SHEETS) {
  const at = (x, y) => [s.x + x / s.kx, s.y + y / s.ky];
  for (const row of s.data.trim().split('\n')) {
    const [head, tail] = row.split(':');
    const hub = at(...head.split(',').map(Number));
    nodes.push([...hub, 3.5, COLORS.t]);
    for (const item of tail.trim().split(/\s+/)) {
      if (!item) continue;
      const [x, y, r] = item.slice(1).split(',').map(Number);
      const p = at(x, y);
      links.push([...hub, ...p]);
      if (item[0] !== 'z') nodes.push([...p, r ? r / s.kx : 3.7, COLORS[item[0]]]);
    }
  }
}
const f = n => n.toFixed(1);
document.getElementById('graph').innerHTML =
  links.map(l => `<line x1="${f(l[0])}" y1="${f(l[1])}" x2="${f(l[2])}" y2="${f(l[3])}"/>`).join('') +
  nodes.map(n => `<circle cx="${f(n[0])}" cy="${f(n[1])}" r="${f(n[2])}" fill="${n[3]}"/>`).join('');
```
